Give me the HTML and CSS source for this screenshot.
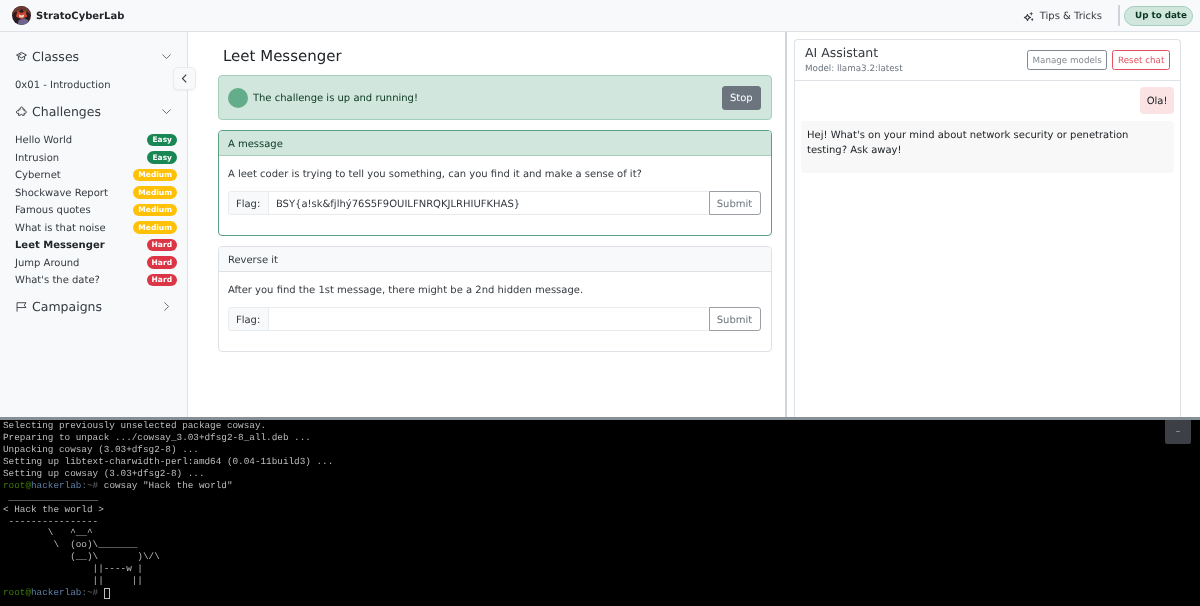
FILE: index.html
```html
<!DOCTYPE html>
<html lang="en">
<head>
<meta charset="utf-8">
<title>StratoCyberLab</title>
<link rel="stylesheet" href="styles.css">
</head>
<body>
<div class="app">
  <header class="topbar">
    <div class="brand">
      <svg class="logo" viewBox="0 0 20 20" aria-hidden="true">
        <defs><clipPath id="logoclip"><circle cx="10" cy="10" r="10"/></clipPath></defs>
        <g clip-path="url(#logoclip)">
          <rect width="20" height="20" fill="#2a1c22"/>
          <path d="M0 0h20v9l-4-3-3 1-3-4-3 4-3-1-4 3z" fill="#6b3a30"/>
          <path d="M4 11l2-6 3 2 2 0 3-2 2 6-6 3z" fill="#c8452f"/>
          <path d="M7 9l3 1 3-1-1 3h-4z" fill="#e8d7cf"/>
          <path d="M7 15l6-2 4 2v5H6z" fill="#6d6590"/>
        </g>
      </svg>
      <span class="brand-name">StratoCyberLab</span>
    </div>
    <div class="topbar-right">
      <a class="tips">
        <svg class="tips-icon" viewBox="0 0 16 16" aria-hidden="true"><path d="M6.500 5l1.400 3.100L11 9.500l-3.100 1.400L6.500 14l-1.400-3.100L2 9.500l3.100-1.400z" fill="none" stroke="#343a40" stroke-width="1.500" stroke-linejoin="round"/><path d="M12 1l.8 2.200L15 4l-2.200.8L12 7l-.8-2.200L9 4l2.200-.8z" fill="#343a40"/><circle cx="13.500" cy="12.500" r="1.500" fill="#343a40"/></svg>
        Tips &amp; Tricks
      </a>
      <span class="vr"></span>
      <span class="status-pill">Up to date</span>
    </div>
  </header>

  <div class="workspace">
    <aside class="sidebar">
      <button class="collapse" aria-label="Collapse sidebar">
        <svg viewBox="0 0 16 16" aria-hidden="true"><path d="M10.500 2.500L5 8l5.500 5.500" fill="none" stroke="#343a40" stroke-width="1.600"/></svg>
      </button>
      <div class="side-head first">
        <span class="side-title">
          <svg class="side-icon" viewBox="0 0 16 16" aria-hidden="true"><path d="M8 2L.8 6 8 10l7.200-4z M3.500 8v4c1.500 2.300 7.500 2.300 9 0V8 M4 6.500L8 4.500" fill="none" stroke="#343a40" stroke-width="1.400" stroke-linejoin="round"/></svg>
          Classes
        </span>
        <svg class="chev" viewBox="0 0 16 16" aria-hidden="true"><path d="M2 5l6 6 6-6" fill="none" stroke="#495057" stroke-width="1.200"/></svg>
      </div>
      <div class="side-row intro"><span>0x01 - Introduction</span></div>
      <div class="side-head second">
        <span class="side-title">
          <svg class="side-icon" viewBox="0 0 16 16" aria-hidden="true"><path d="M4.500 4.500h2.200c-.9-1-.4-3 1.500-3s2.400 2 1.500 3h2.300l-.3 2.700c1-.8 3.300-.4 3.300 1.600s-2.300 2.400-3.300 1.600l.3 3.100H9c.6-1.800-3.400-1.800-2.800 0H3.600l.3-3.100c-1 .8-3.400.4-3.400-1.600s2.400-2.400 3.400-1.600z" fill="none" stroke="#343a40" stroke-width="1.400" stroke-linejoin="round"/></svg>
          Challenges
        </span>
        <svg class="chev" viewBox="0 0 16 16" aria-hidden="true"><path d="M2 5l6 6 6-6" fill="none" stroke="#495057" stroke-width="1.200"/></svg>
      </div>
      <ul class="challenges">
        <li class="side-row"><span>Hello World</span><span class="badge easy">Easy</span></li>
        <li class="side-row"><span>Intrusion</span><span class="badge easy">Easy</span></li>
        <li class="side-row"><span>Cybernet</span><span class="badge medium">Medium</span></li>
        <li class="side-row"><span>Shockwave Report</span><span class="badge medium">Medium</span></li>
        <li class="side-row"><span>Famous quotes</span><span class="badge medium">Medium</span></li>
        <li class="side-row"><span>What is that noise</span><span class="badge medium">Medium</span></li>
        <li class="side-row active"><span>Leet Messenger</span><span class="badge hard">Hard</span></li>
        <li class="side-row"><span>Jump Around</span><span class="badge hard">Hard</span></li>
        <li class="side-row"><span>What's the date?</span><span class="badge hard">Hard</span></li>
      </ul>
      <div class="side-head campaigns">
        <span class="side-title">
          <svg class="side-icon" viewBox="0 0 16 16" aria-hidden="true"><path d="M1.500 15.500V2.500h13l-2.500 3.500 2.500 3.500H1.500" fill="none" stroke="#343a40" stroke-width="1.300" stroke-linejoin="round"/></svg>
          Campaigns
        </span>
        <svg class="chev" viewBox="0 0 16 16" aria-hidden="true"><path d="M5 2l6 6-6 6" fill="none" stroke="#495057" stroke-width="1.200"/></svg>
      </div>
    </aside>

    <main class="content">
      <h1 class="page-title">Leet Messenger</h1>
      <div class="alert">
        <span class="alert-dot"></span>
        <span class="alert-text">The challenge is up and running!</span>
        <button class="btn-stop">Stop</button>
      </div>
      <section class="card solved">
        <div class="card-head">A message</div>
        <div class="card-body">
          <p class="card-text">A leet coder is trying to tell you something, can you find it and make a sense of it?</p>
          <div class="flag-group">
            <span class="flag-label">Flag:</span>
            <span class="flag-input">BSY{a!sk&amp;fjlhý76S5F9OUILFNRQKJLRHIUFKHAS}</span>
            <button class="flag-submit">Submit</button>
          </div>
        </div>
      </section>
      <section class="card">
        <div class="card-head">Reverse it</div>
        <div class="card-body">
          <p class="card-text">After you find the 1st message, there might be a 2nd hidden message.</p>
          <div class="flag-group">
            <span class="flag-label">Flag:</span>
            <span class="flag-input"></span>
            <button class="flag-submit">Submit</button>
          </div>
        </div>
      </section>
    </main>

    <div class="v-split"></div>

    <section class="assistant">
      <div class="chat-card">
        <div class="chat-head">
          <div>
            <div class="chat-title">AI Assistant</div>
            <div class="chat-model">Model: llama3.2:latest</div>
          </div>
          <div class="chat-actions">
            <button class="btn-sm grey">Manage models</button>
            <button class="btn-sm red">Reset chat</button>
          </div>
        </div>
        <div class="chat-body">
          <div class="msg user">Ola!</div>
          <div class="msg bot">Hej! What's on your mind about network security or penetration testing? Ask away!</div>
        </div>
      </div>
    </section>
  </div>

  <section class="terminal">
    <button class="term-min" aria-label="Minimize terminal">–</button>
<pre class="term-text">Selecting previously unselected package cowsay.
Preparing to unpack .../cowsay_3.03+dfsg2-8_all.deb ...
Unpacking cowsay (3.03+dfsg2-8) ...
Setting up libtext-charwidth-perl:amd64 (0.04-11build3) ...
Setting up cowsay (3.03+dfsg2-8) ...
<span class="t-green">root@</span><span class="t-blue">hackerlab</span><span class="t-dim">:~#</span> cowsay "Hack the world"
 ________________
&lt; Hack the world &gt;
 ----------------
        \   ^__^
         \  (oo)\_______
            (__)\       )\/\
                ||----w |
                ||     ||
<span class="t-green">root@</span><span class="t-blue">hackerlab</span><span class="t-dim">:~#</span> <span class="t-cursor"> </span></pre>
  </section>
</div>
</body>
</html>
```
FILE: styles.css
```css
* { box-sizing: border-box; }
html, body { margin: 0; height: 100%; overflow: hidden; }
body { font-family: "DejaVu Sans", sans-serif; font-size: 10px; color: #212529; background: #fff; text-rendering: geometricPrecision; }
button { font-family: inherit; cursor: pointer; text-rendering: geometricPrecision; }

.app { display: flex; flex-direction: column; height: 606px; will-change: transform; }

.topbar { height: 32px; flex: none; display: flex; justify-content: space-between; align-items: center; background: #f8f9fa; border-bottom: 1px solid #dee2e6; padding: 0 7px 0 12px; }
.brand { display: flex; align-items: center; gap: 5px; }
.logo { width: 19px; height: 19px; }
.brand-name { font-weight: 700; font-size: 10px; color: #212529; padding-top: 1px; }
.topbar-right { display: flex; align-items: center; }
.tips { display: flex; align-items: center; gap: 6px; font-size: 10px; color: #343a40; padding-top: 1px; }
.tips-icon { width: 11px; height: 11px; }
.vr { width: 2px; height: 21px; background: #ced4da; margin: 0 4px 0 16px; }
.status-pill { font-weight: 700; font-size: 8.750px; color: #0a3622; background: #d1e7dd; border: 1px solid #a3cfbb; border-radius: 11px; padding: 1px 5px 0 10px; height: 20px; display: flex; align-items: center; }

.workspace { flex: 1; display: flex; min-height: 0; }

.sidebar { position: relative; width: 188px; flex: none; background: #f8f9fa; border-right: 1px solid #dee2e6; padding: 13.500px 10px 0 15px; }
.collapse { position: absolute; top: 35px; right: -9px; width: 23px; height: 23px; padding: 0; border: 1px solid #e9ecef; border-radius: 5px; background: #f8f9fa; display: flex; align-items: center; justify-content: center; box-shadow: 0 1px 2px rgba(0,0,0,.05); }
.collapse svg { width: 11px; height: 11px; }
.side-head { display: flex; justify-content: space-between; align-items: center; height: 22px; padding-right: 5.500px; }
.side-head.second { margin-top: 7px; }
.side-title { display: flex; align-items: center; gap: 5px; font-size: 12.500px; color: #343a40; }
.side-icon { width: 11px; height: 11px; margin-left: 1px; }
.chev { width: 11px; height: 11px; }
.side-row { display: flex; justify-content: space-between; align-items: center; height: 17.500px; font-size: 10px; color: #343a40; }
.side-row > span:first-child { padding-top: 2px; }
.intro { margin-top: 8.500px; }
.challenges { list-style: none; margin: 8.500px 0 0; padding: 0; }
.side-row.active { font-weight: 700; color: #212529; }
.badge { display: inline-block; border-radius: 7px; color: #fff; font-weight: 700; font-size: 7.500px; line-height: 1; padding: 2.500px 5px; }
.easy { background: #198754; }
.medium { background: #ffc107; }
.hard { background: #dc3545; }
.side-head.campaigns { margin-top: 7px; }

.content { flex: 1; min-width: 0; padding: 14px 13.500px 0 29.500px; }
.page-title { font-size: 15px; font-weight: 400; line-height: 20px; margin: 0 0 9px 5.500px; color: #212529; }
.alert { height: 45px; display: flex; align-items: center; background: #d1e7dd; border: 1px solid #a3cfbb; border-radius: 4px; padding: 0 10px 0 9.400px; margin-bottom: 10px; color: #0a3622; }
.alert-dot { width: 20px; height: 20px; border-radius: 50%; background: #198754; opacity: .6; margin-right: 5px; }
.alert-text { flex: 1; padding-top: 2px; }
.btn-stop { height: 24px; width: 38.500px; padding: 1px 0 0; font-size: 10px; color: #fff; background: #6c757d; border: 1px solid #6c757d; border-radius: 3px; }

.card { border: 1px solid #dee2e6; border-radius: 4px; margin-bottom: 10px; background: #fff; overflow: hidden; }
.card.solved { border-color: #5a9f82; }
.card-head { height: 25px; display: flex; align-items: center; padding: 2px 10px 0 9.400px; background: #f8f9fa; border-bottom: 1px solid #dee2e6; color: #343a40; }
.solved .card-head { background: #d1e7dd; border-bottom-color: #a3cfbb; color: #0a3622; }
.card-body { padding: 10px 10px 20px 9.400px; }
.card-text { margin: 0 0 9px; padding-top: 1px; line-height: 15px; color: #343a40; }
.flag-group { display: flex; height: 24px; }
.flag-label { display: flex; align-items: center; padding: 2px 7px 0; width: 41px; background: #f8f9fa; border: 1px solid #e9ecef; border-radius: 3px 0 0 3px; color: #343a40; }
.flag-input { flex: 1; display: flex; align-items: center; padding: 2px 7px 0; margin-left: -1px; border: 1px solid #e9ecef; color: #343a40; }
.flag-submit { width: 52px; margin-left: -1px; padding: 2px 0 0; background: #fff; color: #6c757d; font-size: 10px; border: 1px solid #9aa0a6; border-radius: 0 3px 3px 0; }

.v-split { width: 2px; flex: none; background: #ced4da; }
.assistant { width: 413px; flex: none; padding: 7px 19px 0 7px; }
.chat-card { height: 100%; border: 1px solid #dee2e6; border-bottom: 0; border-radius: 4px 4px 0 0; display: flex; flex-direction: column; }
.chat-head { height: 41px; flex: none; display: flex; justify-content: space-between; align-items: center; padding: 0 10px; border-bottom: 1px solid #dee2e6; }
.chat-title { font-size: 12.500px; color: #343a40; line-height: 17px; }
.chat-model { font-size: 8.750px; color: #6c757d; line-height: 15px; padding-top: 1px; }
.chat-actions { display: flex; gap: 5px; }
.btn-sm { height: 20px; padding: 1px 4.600px 0; font-size: 8.750px; background: #fff; border-radius: 2.500px; opacity: .85; }
.btn-sm.grey { color: #6c757d; border: 1px solid #6c757d; }
.btn-sm.red { color: #dc3545; border: 1px solid #dc3545; }
.chat-body { padding: 6px 6px 0; display: flex; flex-direction: column; gap: 7px; }
.msg { font-size: 10px; line-height: 15px; color: #212529; border-radius: 4px; }
.msg.user { align-self: flex-end; background: #fbe3e4; padding: 7px 6.500px 5px; height: 27px; }
.msg.bot { background: #f8f8f8; padding: 7px 6px 15px; }

.terminal { position: relative; height: 189px; flex: none; background: #000; border-top: 3px solid #868e96; overflow: hidden; }
.term-min { position: absolute; top: 0; right: 9px; width: 26px; height: 24px; padding: 0; background: #3c4046; color: #adb5bd; border: 0; border-radius: 0 0 2px 2px; font-size: 9px; }
.term-text { margin: 0; padding: 0 0 0 3px; font-family: "Liberation Mono", monospace; font-size: 9.330px; line-height: 11.930px; color: #bdbdbd; }
.t-green { color: #4e9a06; opacity: .8; }
.t-blue { color: #5f7fa8; }
.t-dim { color: #666; }
.t-cursor { display: inline-block; width: 6px; height: 11px; border: 1px solid #bdbdbd; vertical-align: -2px; }
```
